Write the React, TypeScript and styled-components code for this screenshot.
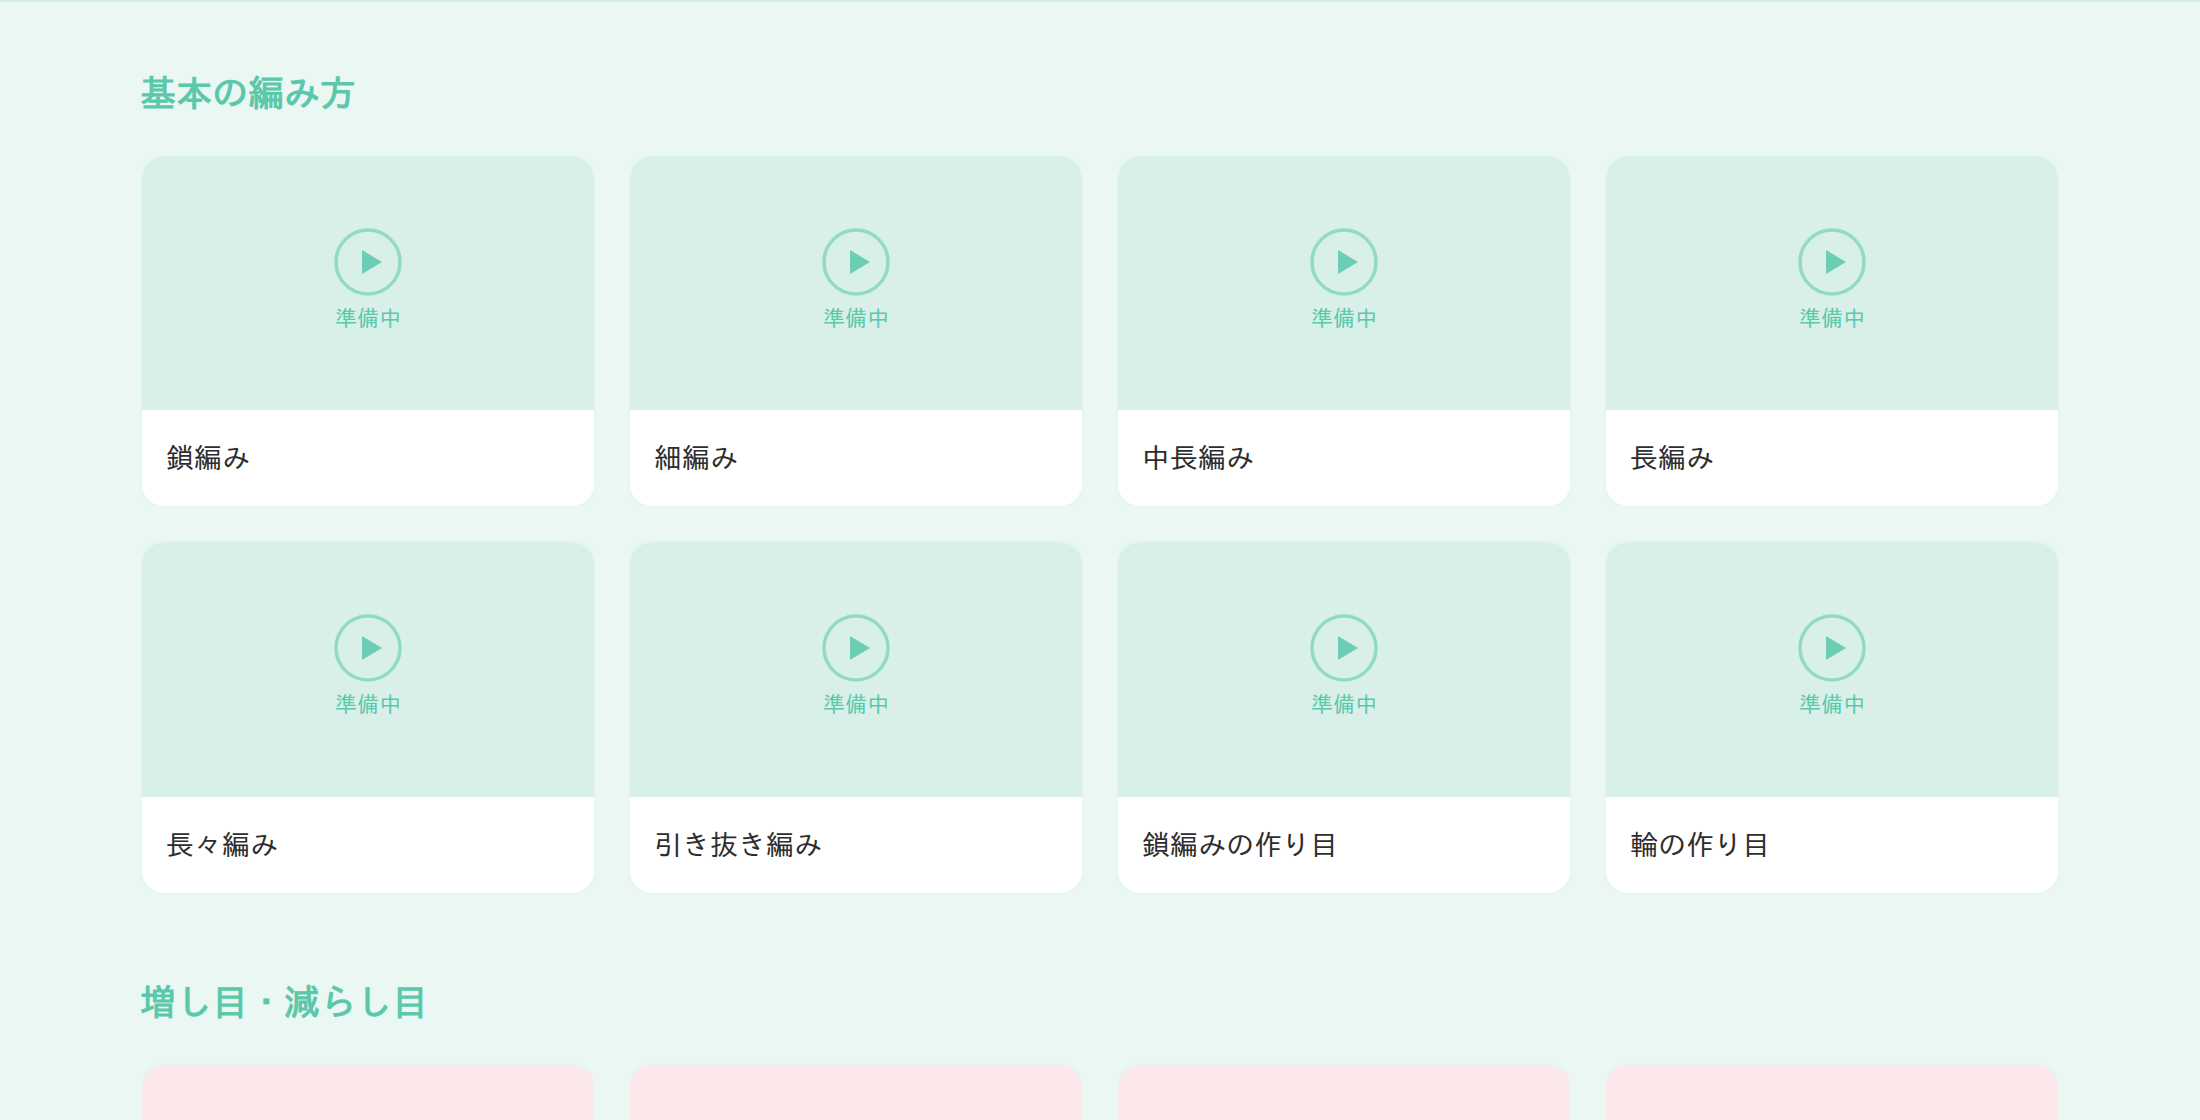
import React from "react";
import styled, { createGlobalStyle } from "styled-components";

const GlobalStyle = createGlobalStyle`
  *, *::before, *::after { box-sizing: border-box; }
  body {
    margin: 0;
    background: #eaf7f2;
    color: #2d2d2d;
    font-family: "IPAGothic", "Noto Sans CJK JP", sans-serif;
  }
`;

const Page = styled.main`
  border-top: 2px solid #d0ede3;
  height: 100vh;
  overflow: hidden;
  padding: 64px 140px 0;
`;

const Content = styled.div`
  max-width: 1920px;
  margin: 0 auto;
  display: flex;
  flex-direction: column;
  gap: 80px;
`;

const SectionTitle = styled.h2`
  margin: 0 0 36px;
  font-size: 36px;
  line-height: 52px;
  font-weight: 700;
  color: #5bc8ac;
`;

const CardGrid = styled.ul`
  list-style: none;
  margin: 0;
  padding: 0;
  display: grid;
  grid-template-columns: repeat(4, minmax(0, 1fr));
  gap: 32px;
`;

const Card = styled.li`
  border: 2px solid #e6f7f2;
  border-radius: 24px;
  overflow: hidden;
  background: #ffffff;
`;

type Tone = "mint" | "pink";

const Thumbnail = styled.div<{ $tone: Tone }>`
  aspect-ratio: 16 / 9;
  display: flex;
  flex-direction: column;
  align-items: center;
  justify-content: center;
  gap: 2px;
  background: ${({ $tone }) => ($tone === "mint" ? "#d9f0e8" : "#fce8ea")};
  color: #5bc8ac;
`;

const Status = styled.span`
  font-size: 22px;
  line-height: 40px;
`;

const CardTitle = styled.h3`
  margin: 0;
  padding: 23px 24px 25px;
  font-size: 28px;
  line-height: 48px;
  font-weight: 400;
`;

const PlayIcon = () => (
  <svg width="68" height="68" viewBox="0 0 68 68" fill="none" aria-hidden="true">
    <circle cx="34" cy="34" r="32" stroke="currentColor" strokeWidth="3.5" opacity="0.56" />
    <path d="M28 22L48 34L28 46Z" fill="currentColor" opacity="0.85" />
  </svg>
);

const basics = [
  "鎖編み",
  "細編み",
  "中長編み",
  "長編み",
  "長々編み",
  "引き抜き編み",
  "鎖編みの作り目",
  "輪の作り目",
];

const shapingSlots = [1, 2, 3, 4];

export default function App() {
  return (
    <>
      <GlobalStyle />
      <Page lang="ja">
        <Content>
          <section>
            <SectionTitle>基本の編み方</SectionTitle>
            <CardGrid>
              {basics.map((name) => (
                <Card key={name}>
                  <Thumbnail $tone="mint">
                    <PlayIcon />
                    <Status>準備中</Status>
                  </Thumbnail>
                  <CardTitle>{name}</CardTitle>
                </Card>
              ))}
            </CardGrid>
          </section>
          <section>
            <SectionTitle>増し目・減らし目</SectionTitle>
            <CardGrid>
              {shapingSlots.map((slot) => (
                <Card key={slot}>
                  <Thumbnail $tone="pink" />
                </Card>
              ))}
            </CardGrid>
          </section>
        </Content>
      </Page>
    </>
  );
}
